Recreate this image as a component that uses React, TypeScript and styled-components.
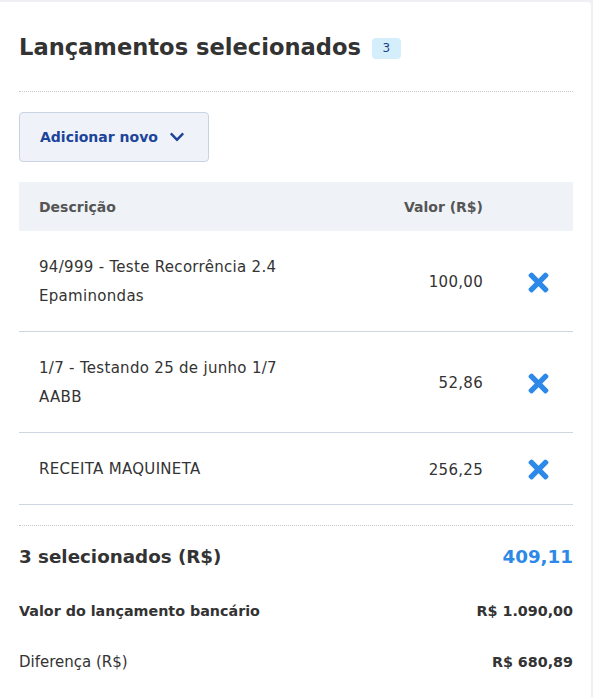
import React from "react";
import styled, { createGlobalStyle } from "styled-components";
import { FaTimes, FaChevronDown } from "react-icons/fa";

const Global = createGlobalStyle`
  html, body { margin: 0; padding: 0; background: #eef0f4; }
  body { font-family: "DejaVu Sans", "Open Sans", sans-serif; color: #333; }
  * { box-sizing: border-box; }
`;

const Page = styled.div`
  padding: 2px 2px 3px 0;
`;

const Card = styled.div`
  background: #fff;
  border-radius: 0 4px 4px 0;
  padding: 28px 18px 26px 19px;
  min-height: 692px;
`;

const TitleRow = styled.div`
  display: flex;
  align-items: center;
  gap: 11px;
  height: 34px;
`;

const Title = styled.h1`
  margin: 0;
  font-size: 22.6px;
  font-weight: 700;
  color: #333;
`;

const Badge = styled.span`
  display: inline-flex;
  align-items: center;
  justify-content: center;
  width: 29px;
  height: 21px;
  border-radius: 4px;
  background: #d4effb;
  color: #1d3f8a;
  font-size: 12px;
  font-weight: 400;
  margin-top: 2px;
`;

const Dotted = styled.hr<{ $top: number; $bottom: number }>`
  border: 0;
  border-top: 1px dotted #c9c9c9;
  margin: ${(p) => p.$top}px 0 ${(p) => p.$bottom}px;
`;

const AddButton = styled.button`
  display: inline-flex;
  align-items: center;
  gap: 11px;
  height: 50px;
  padding: 0 20px 0 20px;
  width: 190px;
  background: #eff3f9;
  border: 1px solid #c9d3e1;
  border-radius: 4px;
  color: #1c449a;
  font-family: inherit;
  font-size: 14px;
  font-weight: 600;
  cursor: pointer;
`;

const Table = styled.div`
  margin-top: 20px;
`;

const Grid = styled.div`
  display: grid;
  grid-template-columns: 1fr 140px 90px;
  align-items: center;
`;

const HeaderRow = styled(Grid)`
  height: 49px;
  background: #eff3f8;
  padding-left: 20px;
  font-size: 14px;
  font-weight: 600;
  color: #555;
`;

const Row = styled(Grid)`
  padding: 22px 0 20px 20px;
  border-bottom: 1px solid #cdd5e0;
  font-size: 15px;
  letter-spacing: 0.3px;
  color: #333;
`;

const Desc = styled.div`
  line-height: 29px;
`;

const Value = styled.div`
  text-align: right;
`;

const RemoveCell = styled.div`
  display: flex;
  justify-content: center;
  color: #2d89e8;
  font-size: 29px;
  padding-left: 20px;
`;

const SummaryRow = styled.div<{ $h: number }>`
  display: flex;
  justify-content: space-between;
  align-items: center;
  height: ${(p) => p.$h}px;
`;

const BigLabel = styled.span<{ $blue?: boolean }>`
  font-size: 18.3px;
  font-weight: 700;
  color: ${(p) => (p.$blue ? "#2d89e8" : "#333")};
`;

const Label = styled.span<{ $bold?: boolean }>`
  font-size: ${(p) => (p.$bold ? 14.3 : 15)}px;
  font-weight: ${(p) => (p.$bold ? 700 : 400)};
  color: #333;
`;

const items = [
  { lines: ["94/999 - Teste Recorrência 2.4", "Epaminondas"], value: "100,00" },
  { lines: ["1/7 - Testando 25 de junho 1/7", "AABB"], value: "52,86" },
  { lines: ["RECEITA MAQUINETA"], value: "256,25" },
];

export default function App() {
  return (
    <Page>
      <Global />
      <Card>
        <TitleRow>
          <Title>Lançamentos selecionados</Title>
          <Badge>3</Badge>
        </TitleRow>
        <Dotted $top={27} $bottom={20} />
        <AddButton>
          Adicionar novo <FaChevronDown size={16} />
        </AddButton>
        <Table>
          <HeaderRow>
            <span>Descrição</span>
            <Value>Valor (R$)</Value>
            <span />
          </HeaderRow>
          {items.map((it, i) => (
            <Row key={i}>
              <Desc>
                {it.lines.map((l, j) => (
                  <div key={j}>{l}</div>
                ))}
              </Desc>
              <Value>{it.value}</Value>
              <RemoveCell>
                <FaTimes />
              </RemoveCell>
            </Row>
          ))}
        </Table>
        <Dotted $top={20} $bottom={0} />
        <SummaryRow $h={60}>
          <BigLabel>3 selecionados (R$)</BigLabel>
          <BigLabel $blue>409,11</BigLabel>
        </SummaryRow>
        <SummaryRow $h={50}>
          <Label $bold>Valor do lançamento bancário</Label>
          <Label $bold>R$ 1.090,00</Label>
        </SummaryRow>
        <SummaryRow $h={52}>
          <Label>Diferença (R$)</Label>
          <Label $bold>R$ 680,89</Label>
        </SummaryRow>
      </Card>
    </Page>
  );
}
